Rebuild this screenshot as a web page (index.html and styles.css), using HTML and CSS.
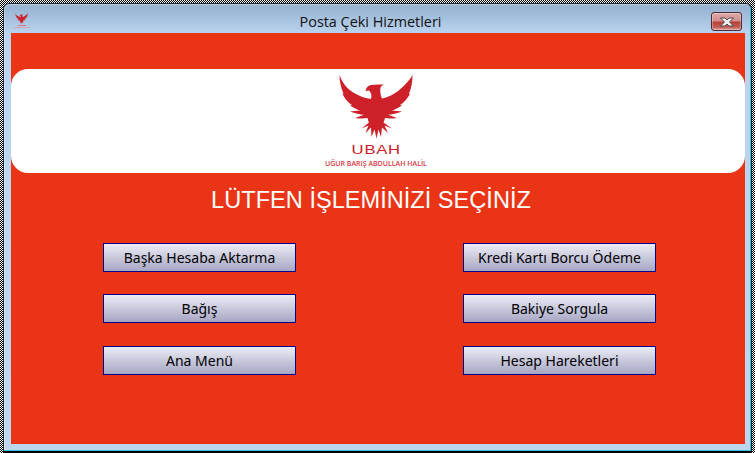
FILE: index.html
```html
<!DOCTYPE html>
<html lang="tr">
<head>
<meta charset="utf-8">
<title>Posta Çeki Hizmetleri</title>
<link rel="stylesheet" href="styles.css">
</head>
<body>
<svg class="defs" width="0" height="0" aria-hidden="true">
  <symbol id="eagle" viewBox="0 0 74 64">
    <path d="M0.500 0 C3 7 8 14 15 18 C21 21.500 27 23.500 32 24 C33 21 32.500 18 30 15.500 L26.500 16 C27 13 29 10.500 32 10 C36 9.300 40 9.300 45 9.600 C42 10.500 41 12.500 41.300 16 C41.500 19 42 21.500 43 23.500 C49 22.500 56 19 62 13.500 C67 9 71 4.500 73.500 0 C73.500 7 72.500 13 70 18.500 L71 19 C68 24 65 27.500 61 30 L63 30.500 C59 33 56 34.500 53 35.500 L63 36.500 C58 38.500 53 39.500 49 39.800 L58 43 C53 43.800 49 43.500 46 43 C45.500 45 45 46.500 44.500 47.500 L53 53.500 L45.500 50.500 L49 58 L43 52.500 L42 62 L39.500 54.500 L37.500 63.500 L35.500 54.500 L32.500 62 L32 52.500 L26.500 58 L29.500 50.500 L22.500 53.500 L30 47.500 C29.500 46.500 29 45 28.500 43 C25 43.500 21 43.800 16 43 L25 39.800 C21 39.500 16 38.500 11 36.500 L21 35.500 C18 34.500 15 33 11 30.500 L13 30 C9 27.500 6 24 3.500 19 L4.500 18.500 C2 13 0.500 7 0.500 0 Z" fill="#cd2028"/>
  </symbol>
</svg>
<div class="selection">
  <main class="window">
    <header class="titlebar">
      <span class="app-icon">
        <svg class="app-eagle" width="13" height="11"><use href="#eagle"/></svg>
        <span class="app-mark"></span>
        <span class="app-mark app-mark-wide"></span>
      </span>
      <h1 class="title">Posta Çeki Hizmetleri</h1>
      <button class="close" type="button" aria-label="Kapat">
        <svg width="16" height="10" viewBox="0 0 16 10"><path d="M1.500 1 H6 L8 3 L10 1 H14.500 L10.500 5 L14.500 9 H10 L8 7 L6 9 H1.500 L5.500 5 Z" fill="#f1f1f1" stroke="#56484c" stroke-width="1"/></svg>
      </button>
    </header>
    <section class="client">
      <div class="banner">
        <svg class="eagle" width="74" height="64"><use href="#eagle"/></svg>
        <div class="brand">UBAH</div>
        <div class="brand-sub">UĞUR BARIŞ ABDULLAH HALİL</div>
      </div>
      <h2 class="heading">LÜTFEN İŞLEMİNİZİ SEÇİNİZ</h2>
      <div class="actions">
        <button class="action" type="button">Başka Hesaba Aktarma</button>
        <button class="action" type="button">Kredi Kartı Borcu Ödeme</button>
        <button class="action" type="button">Bağış</button>
        <button class="action" type="button">Bakiye Sorgula</button>
        <button class="action" type="button">Ana Menü</button>
        <button class="action" type="button">Hesap Hareketleri</button>
      </div>
    </section>
  </main>
</div>
</body>
</html>
```

FILE: styles.css
```css
* { box-sizing: border-box; }

html, body {
  margin: 0;
  padding: 0;
  height: 100%;
  overflow: hidden;
  background: #fff;
}

.defs { display: block; height: 0; }

.selection {
  width: 755px;
  height: 453px;
  padding: 3px 3px 0;
  background: repeating-conic-gradient(#000 0 25%, #fff 0 50%) 0 0 / 2px 2px;
}

.window {
  height: 450px;
  display: flex;
  flex-direction: column;
  border: 1px solid #1c2733;
  border-bottom-width: 2px;
  border-bottom-color: #000;
  border-radius: 6px 6px 0 0;
  padding: 0 6px 7px 7px;
  background: linear-gradient(#94b0cf 0, #b9d3ee 29px, #bdd6f0 100%);
  box-shadow: inset -1px -1px 0 #35c4d8, inset 1px 1px 0 rgba(255, 255, 255, .35);
}

.titlebar {
  flex: none;
  height: 29px;
  display: flex;
  align-items: flex-start;
}

.app-icon {
  flex: none;
  width: 19px;
  padding: 9px 0 0 3px;
  display: flex;
  flex-direction: column;
  align-items: flex-start;
  gap: 1px;
}

.app-eagle { display: block; margin-left: 1px; }

.app-mark {
  display: block;
  width: 8px;
  height: 1px;
  margin-left: 4px;
  background: #cf7b8a;
}

.app-mark-wide {
  width: 16px;
  margin-left: 0;
  background: #d9a2ad;
}

.title {
  flex: 1;
  margin: 0;
  padding-top: 8px;
  text-align: center;
  font: 400 14.4px/20px "Open Sans", sans-serif;
  color: #111;
}

.close {
  flex: none;
  width: 31px;
  height: 19px;
  margin-top: 8px;
  margin-right: 3px;
  padding: 0;
  display: flex;
  align-items: center;
  justify-content: center;
  border: 1px solid #4a2b3c;
  border-radius: 3px;
  background: linear-gradient(#e0aaa8 0, #cf8d8b 48%, #b64034 52%, #c05a50 80%, #d99c95 100%);
  box-shadow: inset 0 0 0 1px rgba(255, 255, 255, .3);
}

.close svg { display: block; }

.client {
  flex: 1;
  min-height: 0;
  display: flex;
  flex-direction: column;
  padding-top: 36px;
  background: #e93516;
}

.banner {
  flex: none;
  height: 104px;
  padding-top: 6px;
  padding-right: 4px;
  display: flex;
  flex-direction: column;
  align-items: center;
  border-radius: 17px;
  background: #fff;
  color: #cd2028;
}

.eagle { display: block; flex: none; }

.brand {
  margin-top: 4px;
  font: 400 13px/13px "Liberation Sans", sans-serif;
  letter-spacing: .6px;
  transform: scaleX(1.28);
}

.brand-sub {
  margin-top: 3px;
  font: 600 7px/9px "Open Sans", sans-serif;
  color: #d6383f;
  white-space: nowrap;
}

.heading {
  margin: 12px 0 0;
  padding-right: 14px;
  text-align: center;
  font: 400 23.6px/30px "Liberation Sans", sans-serif;
  color: #fff;
}

.actions {
  margin-top: 28px;
  padding-left: 92px;
  display: grid;
  grid-template-columns: 193px 193px;
  grid-template-rows: 29px 30px 29px;
  column-gap: 167px;
  row-gap: 22px;
  align-items: start;
}

.action {
  height: 29px;
  padding: 0;
  border: 1px solid #00008b;
  background: linear-gradient(#ececf6, #a6a6c3);
  font: 400 14px/1 "Noto Sans", sans-serif;
  color: #000;
}
```
